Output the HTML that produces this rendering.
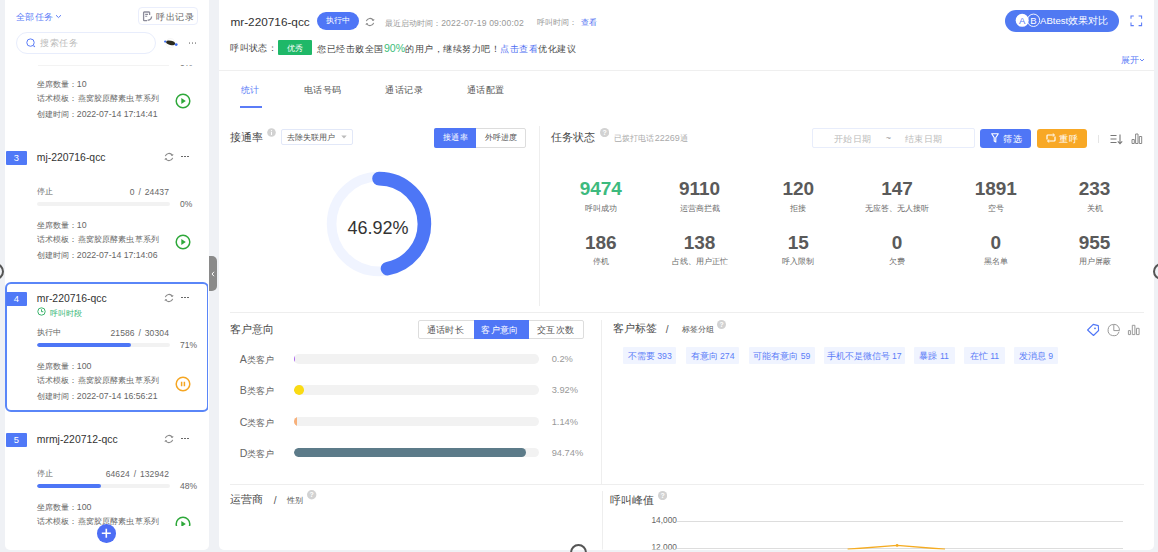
<!DOCTYPE html>
<html><head><meta charset="utf-8">
<style>
*{box-sizing:border-box;margin:0;padding:0}
html,body{width:1158px;height:552px;overflow:hidden;background:#eff1f5;font-family:"Liberation Sans",sans-serif;color:#333}
.a{position:absolute;white-space:nowrap}
#side{position:absolute;left:5px;top:-6px;width:203.6px;height:555.5px;background:#fff;border-radius:5px;overflow:hidden}
#main{position:absolute;left:219.4px;top:-6px;width:934.6px;height:555.5px;background:#fff;border-radius:5px;overflow:hidden}
.p{position:absolute;left:0;top:0;width:1158px;height:552px}
.badge{position:absolute;left:6px;width:20.5px;height:13.8px;background:#5079f7;color:#fff;font-size:9.4px;line-height:14.2px;text-align:center;border-radius:1px}
.ttl{font-size:10.4px;line-height:14px;color:#333}
.meta{font-size:8.13px;line-height:12px;color:#666}
.track{position:absolute;left:37px;width:132.7px;height:4.5px;border-radius:3px;background:#f2f2f2;overflow:hidden}
.fill{position:absolute;left:0;top:0;height:100%;background:#4d76f6;border-radius:3px}
.stat{font-size:8.5px;line-height:12px;color:#666}
.pct{font-size:8.5px;line-height:12px;color:#666}
.tag{top:347.4px;height:16.2px;background:#f0f4ff;color:#5b7cf7;font-size:8.7px;line-height:18px;text-align:center;border-radius:1px;overflow:visible}
.dots{position:absolute;width:8px;height:2px}
.dots i{position:absolute;top:0;width:1.6px;height:1.6px;background:#555;border-radius:50%}
</style></head><body>

<!-- ========== SIDEBAR ========== -->
<div id="side"></div>
<div class="p">
  <!-- list (clipped) -->
  <div style="position:absolute;left:5px;top:64.6px;width:203px;height:461.7px;overflow:hidden">
    <div style="position:absolute;left:-5px;top:-64.6px;width:1158px;height:700px" id="list">
<div class="badge" style="top:10.2px">2</div>
<div class="a ttl" style="left:36.8px;top:9.7px">mr-220716-qcc</div>
<svg class="a" style="left:163.5px;top:11.2px" width="10" height="10" viewBox="0 0 10 10"><path d="M8.3 3.2 A3.9 3.9 0 0 0 1.3 4.2 M1.7 6.8 A3.9 3.9 0 0 0 8.7 5.8" fill="none" stroke="#8a8a8a" stroke-width="1.1"/><path d="M7.2 3.4 L8.6 3.5 L8.9 2" fill="none" stroke="#8a8a8a" stroke-width=".9"/><path d="M2.8 6.6 L1.4 6.5 L1.1 8" fill="none" stroke="#8a8a8a" stroke-width=".9"/></svg>
<div class="dots" style="left:181px;top:14.7px"><i style="left:0"></i><i style="left:3px"></i><i style="left:6px"></i></div>
<div class="a stat" style="left:36.8px;top:45.0px;font-size:8px">停止</div>
<div class="a stat" style="right:989.0px;top:45.0px;letter-spacing:.12px;word-spacing:1.3px">0 / 24437</div>
<div class="track" style="top:60.5px"><div class="fill" style="width:0px"></div></div>
<div class="a pct" style="left:180px;top:57.0px">0%</div>
<div class="a meta" style="left:36.8px;top:77.7px">坐席数量：<span style="font-size:8.8px">10</span></div>
<div class="a meta" style="letter-spacing:.15px;left:36.8px;top:92.6px">话术模板：燕窝胶原酵素虫草系列</div>
<div class="a meta" style="left:36.8px;top:107.5px">创建时间：<span style="font-size:8.7px">2022-07-14 17:14:41</span></div>
<svg class="a" style="left:175.1px;top:93.3px" width="16" height="16" viewBox="0 0 16 16"><circle cx="8" cy="8" r="6.8" fill="none" stroke="#2ea83a" stroke-width="1.5"/><path d="M6.3 5 L10.8 8 L6.3 11 Z" fill="#2ea83a"/></svg>
<div class="badge" style="top:151.2px">3</div>
<div class="a ttl" style="left:36.8px;top:150.7px">mj-220716-qcc</div>
<svg class="a" style="left:163.5px;top:152.2px" width="10" height="10" viewBox="0 0 10 10"><path d="M8.3 3.2 A3.9 3.9 0 0 0 1.3 4.2 M1.7 6.8 A3.9 3.9 0 0 0 8.7 5.8" fill="none" stroke="#8a8a8a" stroke-width="1.1"/><path d="M7.2 3.4 L8.6 3.5 L8.9 2" fill="none" stroke="#8a8a8a" stroke-width=".9"/><path d="M2.8 6.6 L1.4 6.5 L1.1 8" fill="none" stroke="#8a8a8a" stroke-width=".9"/></svg>
<div class="dots" style="left:181px;top:155.7px"><i style="left:0"></i><i style="left:3px"></i><i style="left:6px"></i></div>
<div class="a stat" style="left:36.8px;top:186.0px;font-size:8px">停止</div>
<div class="a stat" style="right:989.0px;top:186.0px;letter-spacing:.12px;word-spacing:1.3px">0 / 24437</div>
<div class="track" style="top:201.5px"><div class="fill" style="width:0px"></div></div>
<div class="a pct" style="left:180px;top:198.0px">0%</div>
<div class="a meta" style="left:36.8px;top:218.7px">坐席数量：<span style="font-size:8.8px">10</span></div>
<div class="a meta" style="letter-spacing:.15px;left:36.8px;top:233.6px">话术模板：燕窝胶原酵素虫草系列</div>
<div class="a meta" style="left:36.8px;top:248.5px">创建时间：<span style="font-size:8.7px">2022-07-14 17:14:06</span></div>
<svg class="a" style="left:175.1px;top:234.3px" width="16" height="16" viewBox="0 0 16 16"><circle cx="8" cy="8" r="6.8" fill="none" stroke="#2ea83a" stroke-width="1.5"/><path d="M6.3 5 L10.8 8 L6.3 11 Z" fill="#2ea83a"/></svg>
<div class="a" style="left:5px;top:282.3px;width:203.6px;height:129.6px;border:2px solid #5a86f8;border-radius:6px"></div>
<div class="badge" style="top:292.2px">4</div>
<div class="a ttl" style="left:36.8px;top:291.7px">mr-220716-qcc</div>
<svg class="a" style="left:163.5px;top:293.2px" width="10" height="10" viewBox="0 0 10 10"><path d="M8.3 3.2 A3.9 3.9 0 0 0 1.3 4.2 M1.7 6.8 A3.9 3.9 0 0 0 8.7 5.8" fill="none" stroke="#8a8a8a" stroke-width="1.1"/><path d="M7.2 3.4 L8.6 3.5 L8.9 2" fill="none" stroke="#8a8a8a" stroke-width=".9"/><path d="M2.8 6.6 L1.4 6.5 L1.1 8" fill="none" stroke="#8a8a8a" stroke-width=".9"/></svg>
<div class="dots" style="left:181px;top:296.7px"><i style="left:0"></i><i style="left:3px"></i><i style="left:6px"></i></div>
<svg class="a" style="left:36.5px;top:307.4px" width="9" height="9" viewBox="0 0 9 9"><circle cx="4.5" cy="4.5" r="3.7" fill="none" stroke="#3bb36b" stroke-width="1"/><path d="M4.5 2.3 V4.7 H6.3" fill="none" stroke="#3bb36b" stroke-width="1"/></svg>
<div class="a meta" style="left:50px;top:307.6px;color:#3bb878;font-size:8px;letter-spacing:.15px">呼叫时段</div>
<div class="a stat" style="left:36.8px;top:327.0px;font-size:8px">执行中</div>
<div class="a stat" style="right:989.0px;top:327.0px;letter-spacing:.12px;word-spacing:1.3px">21586 / 30304</div>
<div class="track" style="top:342.5px"><div class="fill" style="width:94px"></div></div>
<div class="a pct" style="left:180px;top:339.0px">71%</div>
<div class="a meta" style="left:36.8px;top:359.7px">坐席数量：<span style="font-size:8.8px">100</span></div>
<div class="a meta" style="letter-spacing:.15px;left:36.8px;top:374.6px">话术模板：燕窝胶原酵素虫草系列</div>
<div class="a meta" style="left:36.8px;top:389.5px">创建时间：<span style="font-size:8.7px">2022-07-14 16:56:21</span></div>
<svg class="a" style="left:175.1px;top:376.0px" width="16" height="16" viewBox="0 0 16 16"><circle cx="8" cy="8" r="6.8" fill="none" stroke="#f5a623" stroke-width="1.5"/><path d="M6.6 5.8 V10.2 M9.4 5.8 V10.2" stroke="#f5a623" stroke-width="1.5"/></svg>
<div class="badge" style="top:433.2px">5</div>
<div class="a ttl" style="left:36.8px;top:432.7px">mrmj-220712-qcc</div>
<svg class="a" style="left:163.5px;top:434.2px" width="10" height="10" viewBox="0 0 10 10"><path d="M8.3 3.2 A3.9 3.9 0 0 0 1.3 4.2 M1.7 6.8 A3.9 3.9 0 0 0 8.7 5.8" fill="none" stroke="#8a8a8a" stroke-width="1.1"/><path d="M7.2 3.4 L8.6 3.5 L8.9 2" fill="none" stroke="#8a8a8a" stroke-width=".9"/><path d="M2.8 6.6 L1.4 6.5 L1.1 8" fill="none" stroke="#8a8a8a" stroke-width=".9"/></svg>
<div class="dots" style="left:181px;top:437.7px"><i style="left:0"></i><i style="left:3px"></i><i style="left:6px"></i></div>
<div class="a stat" style="left:36.8px;top:468.0px;font-size:8px">停止</div>
<div class="a stat" style="right:989.0px;top:468.0px;letter-spacing:.12px;word-spacing:1.3px">64624 / 132942</div>
<div class="track" style="top:483.5px"><div class="fill" style="width:63.5px"></div></div>
<div class="a pct" style="left:180px;top:480.0px">48%</div>
<div class="a meta" style="left:36.8px;top:500.7px">坐席数量：<span style="font-size:8.8px">100</span></div>
<div class="a meta" style="letter-spacing:.15px;left:36.8px;top:515.6px">话术模板：燕窝胶原酵素虫草系列</div>
<div class="a meta" style="left:36.8px;top:530.5px">创建时间：<span style="font-size:8.7px">2022-07-14 16:50:11</span></div>
<svg class="a" style="left:175.1px;top:516.3px" width="16" height="16" viewBox="0 0 16 16"><circle cx="8" cy="8" r="6.8" fill="none" stroke="#2ea83a" stroke-width="1.5"/><path d="M6.3 5 L10.8 8 L6.3 11 Z" fill="#2ea83a"/></svg>
</div>
  </div>
  <div class="a" style="left:38px;top:64.7px;width:130.5px;height:1px;background:#f3f3f3"></div>
<!-- header -->
  <div class="a" style="left:16px;top:11.2px;font-size:9px;letter-spacing:.35px;line-height:12px;color:#5b7cf7">全部任务<svg width="7" height="5" viewBox="0 0 7 5" style="margin-left:2px;vertical-align:1px"><path d="M1 1.2 L3.5 3.6 L6 1.2" fill="none" stroke="#5b7cf7" stroke-width="1"/></svg></div>
  <div class="a" style="left:137.6px;top:7.2px;width:60.2px;height:17.8px;border:1px solid #eaeefc;border-radius:4px"></div>
  <svg class="a" style="left:141.5px;top:10.5px" width="11" height="11" viewBox="0 0 11 11"><path d="M7.6 4 V1.6 Q7.6 1 7 1 H2.2 Q1.6 1 1.6 1.6 V9 Q1.6 9.6 2.2 9.6 H5" fill="none" stroke="#8c8c9a" stroke-width="1.3"/><path d="M3.2 3.4 H6 M3.2 5.3 H5.2" stroke="#8c8c9a" stroke-width="1.1"/><path d="M5.6 9.4 Q9.5 9 9.6 5.6" fill="none" stroke="#8c8c9a" stroke-width="1.3"/></svg>
  <div class="a" style="left:155.7px;top:10.5px;font-size:9px;letter-spacing:.85px;line-height:12px;color:#666">呼出记录</div>
  <div class="a" style="left:16px;top:32px;width:140px;height:22px;border:1px solid #e8edfc;border-radius:11px"></div>
  <svg class="a" style="left:26px;top:38px" width="10" height="10" viewBox="0 0 10 10"><circle cx="4.5" cy="4.6" r="3.7" fill="none" stroke="#5b7cf7" stroke-width="1"/><path d="M7.5 7.6 L8.8 8.9" stroke="#5b7cf7" stroke-width="1.1"/></svg>
  <div class="a" style="left:40px;top:37.2px;font-size:9px;letter-spacing:.5px;line-height:12px;color:#bbb">搜索任务</div>
  <svg class="a" style="left:163px;top:38px" width="15" height="10" viewBox="0 0 15 10"><circle cx="7.5" cy="5" r="4.5" fill="#fff" stroke="#f0f0f0" stroke-width=".6"/><ellipse cx="7.6" cy="4.9" rx="4.6" ry="2.1" transform="rotate(14 7.6 4.9)" fill="#2b2b1f"/><circle cx="2.2" cy="3.6" r="1.1" fill="#3b6cf0"/><circle cx="13.2" cy="6.6" r="1.4" fill="#3b6cf0"/></svg>
  <div class="dots" style="left:188.9px;top:42.4px"><i style="left:0;background:#999"></i><i style="left:3px;background:#999"></i><i style="left:6px;background:#999"></i></div>
  <!-- footer -->
  <div class="a" style="left:97.3px;top:524.2px;width:18.6px;height:18.6px;border-radius:50%;background:#4d6ef5"></div>
  <svg class="a" style="left:97.3px;top:524.2px" width="18.6" height="18.6" viewBox="0 0 18.6 18.6"><path d="M9.3 4.8 V13.8 M4.8 9.3 H13.8" stroke="#fff" stroke-width="1.6"/></svg>
  <!-- collapse handle -->
  <div class="a" style="left:209px;top:256px;width:7.6px;height:34.5px;background:#8a8a8a;border-radius:0 5px 5px 0"></div>
  <svg class="a" style="left:209px;top:269.6px" width="8" height="8" viewBox="0 0 8 8"><path d="M5 1.8 L3 4 L5 6.2" fill="none" stroke="#fff" stroke-width="1"/></svg>
</div>

<!-- ========== MAIN ========== -->
<div id="main"></div>
<div class="p" id="mainc" style="clip-path:inset(0 4px 2.5px 219px round 0 0 5px 5px)">
<!-- header -->
<div class="a" style="left:230.4px;top:14px;font-size:11.8px;line-height:16px;color:#333">mr-220716-qcc</div>
<div class="a" style="left:317.4px;top:12px;width:41.7px;height:17.6px;border-radius:9px;background:#4f76f6;color:#fff;font-size:8px;letter-spacing:.3px;line-height:17.6px;text-align:center">执行中</div>
<svg class="a" style="left:364.8px;top:17px" width="10" height="10" viewBox="0 0 10 10"><path d="M8.3 3.2 A3.9 3.9 0 0 0 1.3 4.2 M1.7 6.8 A3.9 3.9 0 0 0 8.7 5.8" fill="none" stroke="#8a8a8a" stroke-width="1.1"/><path d="M7.2 3.4 L8.6 3.5 L8.9 2" fill="none" stroke="#8a8a8a" stroke-width=".9"/><path d="M2.8 6.6 L1.4 6.5 L1.1 8" fill="none" stroke="#8a8a8a" stroke-width=".9"/></svg>
<div class="a" style="left:385.2px;top:17px;font-size:8px;line-height:12px;color:#999">最近启动时间：<span style="font-size:8.6px;letter-spacing:.15px">2022-07-19 09:00:02</span></div>
<div class="a" style="left:536.7px;top:17px;font-size:8px;line-height:12px;color:#999">呼叫时间：</div>
<div class="a" style="left:580.8px;top:17px;font-size:8px;line-height:12px;color:#4e6ef2">查看</div>

<div class="a" style="left:230.4px;top:41.5px;font-size:9px;letter-spacing:.3px;line-height:12px;color:#484848">呼叫状态：</div>
<div class="a" style="left:278px;top:40.2px;width:34px;height:14.7px;border-radius:1px;background:#1fb868;color:#fff;font-size:8px;letter-spacing:.2px;line-height:18.2px;text-align:center">优秀</div>
<div class="a" style="left:317.4px;top:41.5px;font-size:9px;letter-spacing:.5px;line-height:12px;color:#484848">您已经击败全国<span style="color:#3bbd7a;font-size:10.6px;letter-spacing:0">90%</span>的用户，继续努力吧！<span style="color:#4e6ef2">点击查看</span>优化建议</div>

<div class="a" style="left:1004.5px;top:9.9px;width:114.3px;height:22px;border-radius:11px;background:#5079f2"></div>
<svg class="a" style="left:1014px;top:12px" width="28" height="17" viewBox="0 0 28 17"><circle cx="8.2" cy="8.3" r="6.5" fill="#fff"/><circle cx="19.5" cy="8.3" r="6.2" fill="none" stroke="#fff" stroke-width=".9"/><text x="8.2" y="11.6" font-size="9.5" font-family="Liberation Sans" fill="#5079f2" text-anchor="middle">A</text><text x="19.5" y="11.6" font-size="9.5" font-family="Liberation Sans" fill="#fff" text-anchor="middle">B</text></svg>
<div class="a" style="left:1040px;top:15.2px;font-size:9.6px;line-height:12px;color:#fff">ABtest效果对比</div>
<svg class="a" style="left:1130.3px;top:14.8px" width="13" height="12" viewBox="0 0 13 12"><path d="M1 3.8 V1 H3.8 M8.6 1 H11.6 V3.8 M11.6 7.6 V10.6 H8.6 M3.8 10.6 H1 V7.6" fill="none" stroke="#5b7cf7" stroke-width="1.05"/></svg>
<div class="a" style="left:1121.3px;top:54.2px;font-size:8.8px;line-height:12px;color:#5b7cf7">展开<svg width="6" height="4" viewBox="0 0 6 4" style="margin-left:0px;vertical-align:1px"><path d="M1 1 L3 3 L5 1" fill="none" stroke="#5b7cf7" stroke-width=".9"/></svg></div>

<div class="a" style="left:219px;top:70px;width:935px;height:1px;background:#efefef"></div>

<!-- tabs -->
<div class="a" style="left:240.8px;top:83.8px;font-size:9px;letter-spacing:.5px;line-height:12px;color:#5b7cf7">统计</div>
<div class="a" style="left:303.7px;top:83.8px;font-size:9px;letter-spacing:.5px;line-height:12px;color:#555">电话号码</div>
<div class="a" style="left:385.2px;top:83.8px;font-size:9px;letter-spacing:.5px;line-height:12px;color:#555">通话记录</div>
<div class="a" style="left:466.8px;top:83.8px;font-size:9px;letter-spacing:.5px;line-height:12px;color:#555">通话配置</div>
<div class="a" style="left:240px;top:106.3px;width:21.7px;height:1.7px;background:#5b7cf7"></div>

<!-- section 1: 接通率 -->
<div class="a" style="left:230px;top:130.6px;font-size:10.6px;line-height:13px;color:#4a4a4a">接通率</div>
<svg class="a" style="left:267.3px;top:128.2px" width="9" height="9" viewBox="0 0 9 9"><circle cx="4.5" cy="4.5" r="4.3" fill="#d2d2d2"/><path d="M4.5 3.8 V7" stroke="#fff" stroke-width="1"/><circle cx="4.5" cy="2.5" r=".6" fill="#fff"/></svg>
<div class="a" style="left:280.8px;top:129.2px;width:72.5px;height:16.2px;border:1px solid #e2e8f8;border-radius:2px"></div>
<div class="a" style="left:286.7px;top:132.2px;font-size:8.05px;line-height:12px;color:#555">去除失联用户</div>
<svg class="a" style="left:341px;top:135px" width="6" height="4" viewBox="0 0 6 4"><path d="M0.3 0.5 H5.7 L3 3.5 Z" fill="#bbb"/></svg>
<div class="a" style="left:434.2px;top:128.4px;width:91.5px;height:19.3px;border:1px solid #ddd;border-radius:2px"></div>
<div class="a" style="left:434.2px;top:128.4px;width:41.5px;height:19.3px;background:#4f76f6;border-radius:2px 0 0 2px"></div>
<div class="a" style="left:442.8px;top:132.3px;font-size:8px;letter-spacing:.6px;line-height:12px;color:#fff">接通率</div>
<div class="a" style="left:484.7px;top:132px;font-size:8.2px;line-height:12px;color:#555">外呼进度</div>
<div class="a" style="left:539px;top:126px;width:1px;height:180px;background:#eeeeee"></div>

<svg class="a" style="left:318.65px;top:163.5px" width="120" height="120" viewBox="0 0 120 120">
  <circle cx="60" cy="60" r="47.4" fill="none" stroke="#f0f4ff" stroke-width="9.6"/>
  <circle cx="60" cy="60" r="45.4" fill="none" stroke="#4d76f6" stroke-width="13.6" stroke-linecap="round" stroke-dasharray="133.85 1000" transform="rotate(-90 60 60)"/>
</svg>
<div class="a" style="left:327.6px;top:216.6px;width:101px;text-align:center;font-size:18px;line-height:22px;color:#333">46.92%</div>

<!-- section 2: 任务状态 -->
<div class="a" style="left:551.2px;top:130.8px;font-size:10.8px;line-height:13px;color:#4a4a4a">任务状态</div>
<svg class="a" style="left:599.6px;top:128px" width="9.2" height="9.2" viewBox="0 0 9.2 9.2"><circle cx="4.6" cy="4.6" r="4.6" fill="#d2d2d2"/><text x="4.6" y="7.4" font-size="7" font-family="Liberation Sans" font-weight="bold" fill="#fff" text-anchor="middle">?</text></svg>
<div class="a" style="left:613.7px;top:132.2px;font-size:8px;letter-spacing:.2px;line-height:12px;color:#aaa">已拨打电话<span style="font-size:9px;letter-spacing:0">22269</span>通</div>
<div class="a" style="left:812.4px;top:128.3px;width:162.6px;height:19.4px;border:1px solid #e8edfb;border-radius:2px"></div>
<div class="a" style="left:833.6px;top:132.8px;font-size:9px;letter-spacing:.6px;line-height:12px;color:#bbb">开始日期</div>
<div class="a" style="left:885.8px;top:131.6px;font-size:9px;line-height:12px;color:#999">~</div>
<div class="a" style="left:904.5px;top:132.8px;font-size:9px;letter-spacing:.6px;line-height:12px;color:#bbb">结束日期</div>
<div class="a" style="left:980.2px;top:128.6px;width:50.8px;height:19.2px;border-radius:3px;background:#4f76f6"></div>
<svg class="a" style="left:990.5px;top:133px" width="8" height="10" viewBox="0 0 8 10"><path d="M0.7 0.8 H7.3 L4.8 4.6 V9 L3.2 8 V4.6 Z" fill="none" stroke="#fff" stroke-width="1.1" stroke-linejoin="round"/></svg>
<div class="a" style="left:1003.4px;top:132.8px;font-size:9px;letter-spacing:.6px;line-height:12px;color:#fff">筛选</div>
<div class="a" style="left:1037px;top:128.6px;width:50.4px;height:19.2px;border-radius:3px;background:#f8a825"></div>
<svg class="a" style="left:1046px;top:133px" width="10" height="10" viewBox="0 0 10 10"><path d="M2.5 8 H8.3 Q9 8 9 7.3 V3.5 M7.5 2 H1.7 Q1 2 1 2.7 V6.5" fill="none" stroke="#fff" stroke-width="1.2"/><path d="M6.8 0.6 L8.6 2 L6.8 3.4 M3.2 6.6 L1.4 8 L3.2 9.4" fill="none" stroke="#fff" stroke-width="1"/></svg>
<div class="a" style="left:1059.2px;top:132.8px;font-size:9px;letter-spacing:.8px;line-height:12px;color:#fff">重呼</div>
<div class="a" style="left:1098px;top:134.5px;width:1px;height:8.5px;background:#e5e5e5"></div>
<svg class="a" style="left:1109.9px;top:133.5px" width="13" height="11" viewBox="0 0 13 11"><path d="M0.5 1.5 H6.5 M0.5 5 H6.5 M0.5 8.5 H6.5" stroke="#777" stroke-width="1.1"/><path d="M10 0.5 V9.5 M7.8 7.4 L10 9.8 L12.2 7.4" fill="none" stroke="#777" stroke-width="1.1"/></svg>
<svg class="a" style="left:1131.4px;top:132.8px" width="12" height="11" viewBox="0 0 12 11"><path d="M1 10.5 V6.5 H3.3 V10.5 Z M4.6 10.5 V1 H7 V10.5 Z M8.3 10.5 V3.5 H10.7 V10.5 Z" fill="none" stroke="#888" stroke-width="1"/></svg>

<!-- stats grid -->
<div class="a" style="left:550.8px;top:178.3px;width:100px;text-align:center;font-size:19px;line-height:22px;font-weight:bold;color:#3dba7e">9474</div>
<div class="a" style="left:649.5px;top:178.3px;width:100px;text-align:center;font-size:19px;line-height:22px;font-weight:bold;color:#5a5a5a">9110</div>
<div class="a" style="left:748.3px;top:178.3px;width:100px;text-align:center;font-size:19px;line-height:22px;font-weight:bold;color:#5a5a5a">120</div>
<div class="a" style="left:847px;top:178.3px;width:100px;text-align:center;font-size:19px;line-height:22px;font-weight:bold;color:#5a5a5a">147</div>
<div class="a" style="left:945.8px;top:178.3px;width:100px;text-align:center;font-size:19px;line-height:22px;font-weight:bold;color:#5a5a5a">1891</div>
<div class="a" style="left:1044.5px;top:178.3px;width:100px;text-align:center;font-size:19px;line-height:22px;font-weight:bold;color:#5a5a5a">233</div>
<div class="a" style="left:550.8px;top:203.2px;width:100px;text-align:center;font-size:8.2px;line-height:12px;color:#6a6a6a">呼叫成功</div>
<div class="a" style="left:649.5px;top:203.2px;width:100px;text-align:center;font-size:8.2px;line-height:12px;color:#6a6a6a">运营商拦截</div>
<div class="a" style="left:748.3px;top:203.2px;width:100px;text-align:center;font-size:8.2px;line-height:12px;color:#6a6a6a">拒接</div>
<div class="a" style="left:847px;top:203.2px;width:100px;text-align:center;font-size:8.2px;line-height:12px;color:#6a6a6a">无应答、无人接听</div>
<div class="a" style="left:945.8px;top:203.2px;width:100px;text-align:center;font-size:8.2px;line-height:12px;color:#6a6a6a">空号</div>
<div class="a" style="left:1044.5px;top:203.2px;width:100px;text-align:center;font-size:8.2px;line-height:12px;color:#6a6a6a">关机</div>
<div class="a" style="left:550.8px;top:231.8px;width:100px;text-align:center;font-size:19px;line-height:22px;font-weight:bold;color:#5a5a5a">186</div>
<div class="a" style="left:649.5px;top:231.8px;width:100px;text-align:center;font-size:19px;line-height:22px;font-weight:bold;color:#5a5a5a">138</div>
<div class="a" style="left:748.3px;top:231.8px;width:100px;text-align:center;font-size:19px;line-height:22px;font-weight:bold;color:#5a5a5a">15</div>
<div class="a" style="left:847px;top:231.8px;width:100px;text-align:center;font-size:19px;line-height:22px;font-weight:bold;color:#5a5a5a">0</div>
<div class="a" style="left:945.8px;top:231.8px;width:100px;text-align:center;font-size:19px;line-height:22px;font-weight:bold;color:#5a5a5a">0</div>
<div class="a" style="left:1044.5px;top:231.8px;width:100px;text-align:center;font-size:19px;line-height:22px;font-weight:bold;color:#5a5a5a">955</div>
<div class="a" style="left:550.8px;top:256.3px;width:100px;text-align:center;font-size:8.2px;line-height:12px;color:#6a6a6a">停机</div>
<div class="a" style="left:649.5px;top:256.3px;width:100px;text-align:center;font-size:8.2px;line-height:12px;color:#6a6a6a">占线、用户正忙</div>
<div class="a" style="left:748.3px;top:256.3px;width:100px;text-align:center;font-size:8.2px;line-height:12px;color:#6a6a6a">呼入限制</div>
<div class="a" style="left:847px;top:256.3px;width:100px;text-align:center;font-size:8.2px;line-height:12px;color:#6a6a6a">欠费</div>
<div class="a" style="left:945.8px;top:256.3px;width:100px;text-align:center;font-size:8.2px;line-height:12px;color:#6a6a6a">黑名单</div>
<div class="a" style="left:1044.5px;top:256.3px;width:100px;text-align:center;font-size:8.2px;line-height:12px;color:#6a6a6a">用户屏蔽</div>

<!-- divider -->
<div class="a" style="left:230px;top:312px;width:914px;height:1px;background:#eeeeee"></div>

<!-- section 3: 客户意向 -->
<div class="a" style="left:230px;top:322.5px;font-size:10.5px;line-height:13px;color:#4a4a4a">客户意向</div>
<div class="a" style="left:418.4px;top:320px;width:165.5px;height:19px;border:1px solid #ddd;border-radius:2px"></div>
<div class="a" style="left:473.7px;top:320px;width:55.1px;height:19px;background:#4f76f6"></div>
<div class="a" style="left:426.6px;top:323.5px;font-size:9px;letter-spacing:.4px;line-height:12px;color:#555">通话时长</div>
<div class="a" style="left:481.3px;top:323.5px;font-size:9px;letter-spacing:.4px;line-height:12px;color:#fff">客户意向</div>
<div class="a" style="left:536.8px;top:323.5px;font-size:9px;letter-spacing:.4px;line-height:12px;color:#555">交互次数</div>
<div class="a" style="left:601px;top:319.7px;width:1px;height:165px;background:#eeeeee"></div>

<div class="a" style="left:239.8px;top:353.1px;font-size:9.3px;line-height:12px;color:#666"><span style="font-size:10.6px">A</span>类客户</div>
<div class="a" style="left:239.8px;top:384.2px;font-size:9.3px;line-height:12px;color:#666"><span style="font-size:10.6px">B</span>类客户</div>
<div class="a" style="left:239.8px;top:415.5px;font-size:9.3px;line-height:12px;color:#666"><span style="font-size:10.6px">C</span>类客户</div>
<div class="a" style="left:239.8px;top:446.6px;font-size:9.3px;line-height:12px;color:#666"><span style="font-size:10.6px">D</span>类客户</div>
<div class="a" style="left:294.1px;top:354.3px;width:244.6px;height:9.6px;border-radius:4.8px;background:#f2f2f2;overflow:hidden"><div style="position:absolute;left:0;top:0;width:1px;height:100%;background:#b06cf0"></div></div>
<div class="a" style="left:294.1px;top:385.4px;width:244.6px;height:9.6px;border-radius:4.8px;background:#f2f2f2;overflow:hidden"><div style="position:absolute;left:0;top:0;width:9.8px;height:100%;border-radius:4.8px;background:#fadb14"></div></div>
<div class="a" style="left:294.1px;top:416.7px;width:244.6px;height:9.6px;border-radius:4.8px;background:#f2f2f2;overflow:hidden"><div style="position:absolute;left:0;top:0;width:2.6px;height:100%;background:#f7b07a"></div></div>
<div class="a" style="left:294.1px;top:447.8px;width:244.6px;height:9.6px;border-radius:4.8px;background:#f2f2f2;overflow:hidden"><div style="position:absolute;left:0;top:0;width:231.6px;height:100%;border-radius:4.8px;background:#5c7b89"></div></div>
<div class="a" style="left:551.7px;top:353.1px;font-size:9.3px;line-height:12px;color:#999">0.2%</div>
<div class="a" style="left:551.7px;top:384.2px;font-size:9.3px;line-height:12px;color:#999">3.92%</div>
<div class="a" style="left:551.7px;top:415.5px;font-size:9.3px;line-height:12px;color:#999">1.14%</div>
<div class="a" style="left:551.7px;top:446.6px;font-size:9.3px;line-height:12px;color:#999">94.74%</div>

<!-- section 4: 客户标签 -->
<div class="a" style="left:612.7px;top:322.2px;font-size:10.8px;line-height:13px;color:#4a4a4a">客户标签</div>
<div class="a" style="left:665.8px;top:324.3px;font-size:10.2px;line-height:12px;color:#555">/</div>
<div class="a" style="left:681.5px;top:324.1px;font-size:7.9px;line-height:12px;color:#555">标签分组</div>
<svg class="a" style="left:717.4px;top:319.7px" width="9" height="9" viewBox="0 0 9 9"><circle cx="4.5" cy="4.5" r="4.5" fill="#d2d2d2"/><text x="4.5" y="7.2" font-size="6.8" font-family="Liberation Sans" font-weight="bold" fill="#fff" text-anchor="middle">?</text></svg>
<div class="a tag" style="left:623.2px;width:53.2px">不需要 393</div>
<div class="a tag" style="left:685.7px;width:53.8px">有意向 274</div>
<div class="a tag" style="left:749px;width:65.6px">可能有意向 59</div>
<div class="a tag" style="left:823.6px;width:81.1px">手机不是微信号 17</div>
<div class="a tag" style="left:913.8px;width:40.8px">暴躁 11</div>
<div class="a tag" style="left:964.2px;width:40.5px">在忙 11</div>
<div class="a tag" style="left:1013.6px;width:44.6px">发消息 9</div>
<svg class="a" style="left:1080px;top:318px" width="68" height="24" viewBox="1080 318 68 24">
<path d="M1087.6 330 L1093.2 324.4 L1098.3 325.6 L1098.6 330.5 L1093.5 335.5 Z" fill="none" stroke="#4f76f6" stroke-width="1.1" stroke-linejoin="round"/><circle cx="1095" cy="328.3" r=".9" fill="#4f76f6"/>
<path d="M1113.6 324.5 A5.6 5.6 0 1 0 1119 331.8" fill="none" stroke="#9a9a9a" stroke-width="1"/><path d="M1113.8 324.3 V330.6 H1119.4 A5.6 5.6 0 0 0 1113.8 324.3 Z" fill="none" stroke="#9a9a9a" stroke-width="1"/>
<path d="M1128.4 334.6 V330.6 H1130.4 V334.6 Z M1132.3 334.6 V325.3 H1134.9 V334.6 Z M1136.5 334.6 V328.3 H1139.1 V334.6 Z" fill="none" stroke="#9a9a9a" stroke-width="1"/>
</svg>

<!-- divider -->
<div class="a" style="left:230px;top:483.6px;width:914px;height:1px;background:#eeeeee"></div>

<!-- section 5 -->
<div class="a" style="left:229.8px;top:493.4px;font-size:10.7px;line-height:13px;color:#4a4a4a">运营商</div>
<div class="a" style="left:273.8px;top:494.8px;font-size:10.2px;line-height:12px;color:#555">/</div>
<div class="a" style="left:287.4px;top:494.6px;font-size:7.8px;line-height:12px;color:#555">性别</div>
<svg class="a" style="left:307.4px;top:490.3px" width="9.4" height="9.4" viewBox="0 0 9.4 9.4"><circle cx="4.7" cy="4.7" r="4.7" fill="#d2d2d2"/><text x="4.7" y="7.4" font-size="7" font-family="Liberation Sans" font-weight="bold" fill="#fff" text-anchor="middle">?</text></svg>

<div class="a" style="left:602px;top:490.6px;width:1px;height:62px;background:#eeeeee"></div>
<div class="a" style="left:609.6px;top:493.6px;font-size:10.8px;line-height:13px;color:#4a4a4a">呼叫峰值</div>
<svg class="a" style="left:657.5px;top:490.6px" width="9.2" height="9.2" viewBox="0 0 9.2 9.2"><circle cx="4.6" cy="4.6" r="4.6" fill="#d2d2d2"/><text x="4.6" y="7.4" font-size="7" font-family="Liberation Sans" font-weight="bold" fill="#fff" text-anchor="middle">?</text></svg>
<div class="a" style="left:651.5px;top:514.3px;font-size:8.3px;line-height:12px;color:#666">14,000</div>
<div class="a" style="left:677px;top:521px;width:446px;height:1px;background:#dddddd"></div>
<div class="a" style="left:651.5px;top:540.8px;font-size:8.3px;line-height:12px;color:#666">12,000</div>
<div class="a" style="left:677px;top:548px;width:446px;height:1px;background:#dddddd"></div>
<svg class="a" style="left:800px;top:540px" width="200" height="12" viewBox="800 540 200 12"><polyline points="847.6,549.3 897.1,545.4 945,549.3" fill="none" stroke="#f5ac22" stroke-width="1.4"/><circle cx="897.1" cy="545.4" r="1.3" fill="#f5ac22"/></svg>

</div>

<!-- selection handles -->
<div class="a" style="left:-13.5px;top:262.5px;width:17px;height:17px;border:2.6px solid #555;border-radius:50%"></div>
<div class="a" style="left:1153px;top:263px;width:17px;height:17px;border:2.6px solid #555;border-radius:50%"></div>
<div class="a" style="left:570px;top:544.1px;width:17px;height:17px;border:2.6px solid #555;border-radius:50%"></div>
</body></html>
